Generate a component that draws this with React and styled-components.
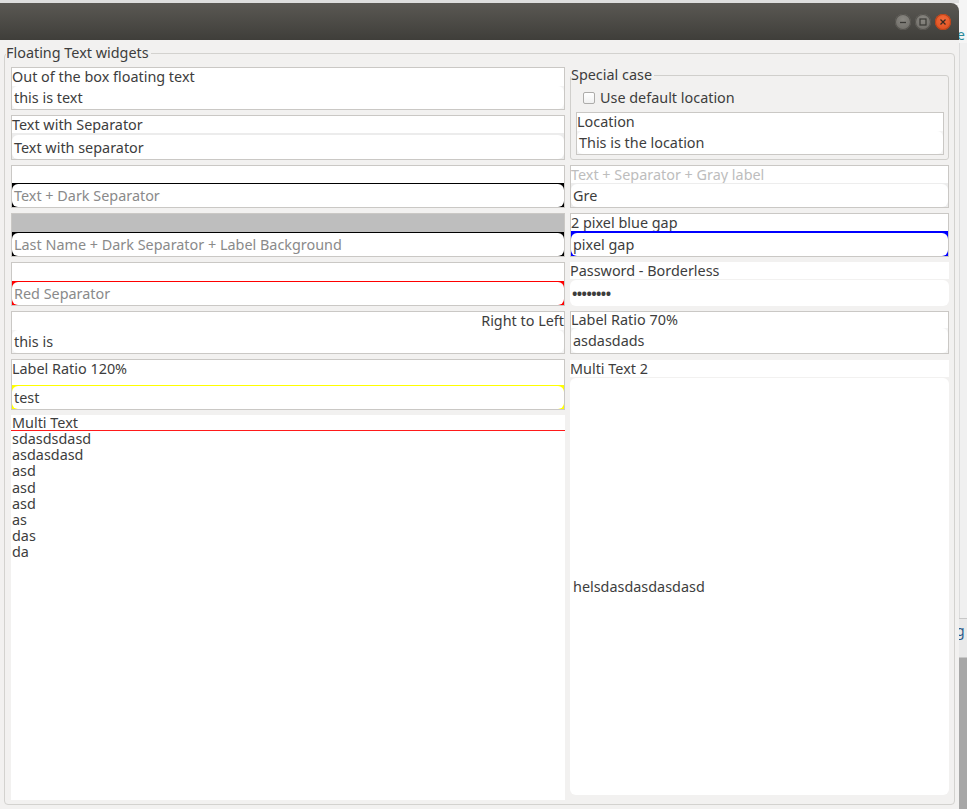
import React from 'react';
import styled, { createGlobalStyle } from 'styled-components';

const Global = createGlobalStyle`
  html, body { margin: 0; padding: 0; width: 967px; height: 809px; overflow: hidden; background: #dedede; }
  body { font-family: "Noto Sans", "Open Sans", sans-serif; font-size: 14.4px; color: #3d3d3d; }
  * { box-sizing: border-box; }
`;

const Screen = styled.div`
  display: flex;
  width: 967px;
  height: 809px;
`;

const Window = styled.div`
  width: 959px;
  flex: 0 0 959px;
  margin-top: 3px;
  display: flex;
  flex-direction: column;
  background: #f2f1f0;
`;

const TitleBar = styled.div`
  flex: 0 0 37px;
  background: linear-gradient(#5a5853, #3f3e3a);
  border-radius: 0 8px 0 0;
  display: flex;
  align-items: center;
  justify-content: flex-end;
  gap: 4px;
  padding: 1px 8px 0 0;
`;

const WinButton = styled.span`
  width: 16px;
  height: 16px;
  border-radius: 50%;
  display: flex;
  align-items: center;
  justify-content: center;
  background: ${p => (p.$close ? 'radial-gradient(circle at 50% 35%, #f26b3a, #d9491a)' : 'radial-gradient(circle at 50% 35%, #8a8882, #6a6863)')};
  box-shadow: inset 0 0 0 1px ${p => (p.$close ? '#b8431a' : '#55534e')};
`;

const Desktop = styled.div`
  flex: 1;
  display: flex;
  flex-direction: column;
  overflow: hidden;
  font-size: 14px;
`;

const DeskTop = styled.div`
  flex: 0 0 43px;
  background: #f5f5f5;
  color: #2a8a9a;
  line-height: 16px;
  padding-top: 27px;
  text-indent: -2px;
`;

const DeskMid = styled.div`
  flex: 0 0 575px;
  background: #f0f0f0;
  border-left: 1px solid #dcdcdc;
`;

const DeskLink = styled.div`
  flex: 0 0 40px;
  background: #e9e9e9;
  border-top: 1px solid #c8c8c8;
  border-bottom: 1px solid #c8c8c8;
  color: #2a5a8a;
  text-decoration: underline;
  text-indent: -3px;
  line-height: 24px;
`;

const DeskLow = styled.div`
  flex: 1;
  background: #a7a7a7;
`;

const Body = styled.div`
  flex: 1;
  padding: 5px 4px 4px 4px;
`;

const Frame = styled.fieldset`
  margin: 0;
  border: 1px solid #d3d2cf;
  border-radius: 4px;
  padding: 6px 5px 4px 6px;
  min-width: 0;
`;

const Legend = styled.legend`
  padding: 0 2px 0 0;
  margin-left: ${p => p.$offset}px;
  line-height: 16px;
  color: #3d3d3d;
`;

const Grid = styled.div`
  display: grid;
  height: 733px;
  grid-template-columns: 554px 379px;
  grid-template-rows: 43px 45px 43px 44px 44px 43px 51px 1fr;
  column-gap: 5px;
  row-gap: 5px;
`;

const Cell = styled.div`
  grid-column: ${p => p.$col};
  grid-row: ${p => p.$row};
  display: flex;
  flex-direction: column;
  min-height: 0;
`;

const Box = styled.div`
  flex: 1;
  display: flex;
  flex-direction: column;
  border: ${p => (p.$borderless ? 'none' : '1px solid #cac8c5')};
  background: ${p => (p.$borderless ? 'transparent' : '#ffffff')};
  min-height: 0;
`;

const Label = styled.div`
  flex: 1 1 auto;
  min-height: 0;
  background: ${p => p.$bg || '#ffffff'};
  color: ${p => p.$color || '#3d3d3d'};
  text-align: ${p => p.$align || 'left'};
  line-height: ${p => p.$lh || 18}px;
  white-space: nowrap;
`;

const Field = styled.div`
  flex: 0 0 ${p => p.$h}px;
  background: ${p => p.$sep};
  padding-top: ${p => p.$sepW}px;
  display: flex;
`;

const Input = styled.div`
  flex: 1;
  background: #ffffff;
  border-radius: 6px;
  display: flex;
  align-items: center;
  padding-left: 2px;
  white-space: nowrap;
  overflow: hidden;
  color: ${p => (p.$placeholder ? '#8a8a8a' : '#3d3d3d')};
`;

const Group = styled.fieldset`
  flex: 1;
  margin: 0;
  border: 1px solid #d0cfcc;
  border-radius: 3px;
  padding: 7px 4px 4px 5px;
  min-width: 0;
  display: flex;
  flex-direction: column;
`;

const CheckRow = styled.label`
  flex: 0 0 16px;
  margin: 0 0 6px 7px;
  display: flex;
  align-items: center;
  gap: 5px;
  line-height: 16px;
`;

const CheckBox = styled.span`
  width: 12px;
  height: 12px;
  border: 1px solid #adacaa;
  border-radius: 2px;
  background: linear-gradient(#ffffff, #f1f1f1);
`;

const LocationWrap = styled.div`
  flex: 0 0 43px;
  display: flex;
  flex-direction: column;
`;

const MultiBox = styled.div`
  flex: 1;
  background: #ffffff;
  display: flex;
  flex-direction: column;
`;

const MultiLabel = styled.div`
  flex: 0 0 15px;
  line-height: 15px;
  border-bottom: 1px solid #ff1a1a;
  padding-left: 1px;
`;

const MultiLines = styled.div`
  line-height: 16.2px;
  padding-left: 1px;
  white-space: pre;
`;

const Multi2 = styled.div`
  flex: 1;
  margin: 1px 0 5px;
  display: flex;
  flex-direction: column;
  gap: 1px;
`;

const Multi2Label = styled.div`
  flex: 0 0 17px;
  background: #ffffff;
  line-height: 17px;
`;

const Multi2Area = styled.div`
  flex: 1;
  background: #ffffff;
  border-radius: 6px;
  display: flex;
  align-items: center;
  padding-left: 3px;
`;

const Dots = styled.span`
  font-size: 14.4px;
  font-weight: 700;
  letter-spacing: -0.6px;
`;

function FloatingText({ label, value, placeholder, sep = '#f4f4f4', sepW = 0, fieldH = 23, labelBg, labelColor, labelLh, align, borderless }) {
  return (
    <Box $borderless={borderless}>
      <Label $bg={labelBg} $color={labelColor} $align={align} $lh={labelLh}>{label}</Label>
      <Field $h={fieldH} $sep={sep} $sepW={sepW}>
        <Input $placeholder={!value && !!placeholder}>{value || placeholder}</Input>
      </Field>
    </Box>
  );
}

const Minus = () => (
  <svg width="8" height="8" viewBox="0 0 8 8"><path d="M1 4.5h6" stroke="#3a3935" strokeWidth="1.3" /></svg>
);
const Square = () => (
  <svg width="8" height="8" viewBox="0 0 8 8"><rect x="1" y="1" width="6" height="6" fill="none" stroke="#3a3935" strokeWidth="1.2" /></svg>
);
const Cross = () => (
  <svg width="8" height="8" viewBox="0 0 8 8"><path d="M1.5 1.5l5 5M6.5 1.5l-5 5" stroke="#3a2a22" strokeWidth="1.3" /></svg>
);

const multiText = ['sdasdsdasd', 'asdasdasd', 'asd', 'asd', 'asd', 'as', 'das', 'da'].join('\n');

export default function App() {
  return (
    <>
      <Global />
      <Screen>
        <Window>
          <TitleBar>
            <WinButton><Minus /></WinButton>
            <WinButton><Square /></WinButton>
            <WinButton $close><Cross /></WinButton>
          </TitleBar>
          <Body>
            <Frame>
              <Legend $offset={-5}>Floating Text widgets</Legend>
              <Grid>
                <Cell $col="1" $row="1">
                  <FloatingText label="Out of the box floating text" value="this is text" />
                </Cell>
                <Cell $col="1" $row="2">
                  <FloatingText label="Text with Separator" value="Text with separator" fieldH={26} sep="#ececec" sepW={2} />
                </Cell>
                <Cell $col="1" $row="3">
                  <FloatingText label="" placeholder="Text + Dark Separator" fieldH={24} sep="#000000" sepW={1} />
                </Cell>
                <Cell $col="1" $row="4">
                  <FloatingText label="" labelBg="#bebebe" placeholder="Last Name + Dark Separator + Label Background" fieldH={24} sep="#000000" sepW={1} />
                </Cell>
                <Cell $col="1" $row="5">
                  <FloatingText label="" placeholder="Red Separator" fieldH={24} sep="#ff0000" sepW={1} />
                </Cell>
                <Cell $col="1" $row="6">
                  <FloatingText label="Right to Left" align="right" value="this is" />
                </Cell>
                <Cell $col="1" $row="7">
                  <FloatingText label="Label Ratio 120%" value="test" fieldH={24} sep="#ffff00" sepW={1} />
                </Cell>
                <Cell $col="1" $row="8">
                  <MultiBox>
                    <MultiLabel>Multi Text</MultiLabel>
                    <MultiLines>{multiText}</MultiLines>
                  </MultiBox>
                </Cell>

                <Cell $col="2" $row="1 / span 2">
                  <Group>
                    <Legend $offset={-5}>Special case</Legend>
                    <CheckRow>
                      <CheckBox />
                      Use default location
                    </CheckRow>
                    <LocationWrap>
                      <FloatingText label="Location" value="This is the location" />
                    </LocationWrap>
                  </Group>
                </Cell>
                <Cell $col="2" $row="3">
                  <FloatingText label="Text + Separator + Gray label" labelColor="#bdbdbd" value="Gre" fieldH={24} sep="#ededed" sepW={1} />
                </Cell>
                <Cell $col="2" $row="4">
                  <FloatingText label="2 pixel blue gap" value="pixel gap" fieldH={25} sep="#0000ff" sepW={2} />
                </Cell>
                <Cell $col="2" $row="5">
                  <FloatingText borderless label="Password - Borderless" value={<Dots>••••••••</Dots>} fieldH={27} sep="transparent" sepW={1} />
                </Cell>
                <Cell $col="2" $row="6">
                  <FloatingText label="Label Ratio 70%" labelLh={16} value="asdasdads" fieldH={25} />
                </Cell>
                <Cell $col="2" $row="7 / span 2">
                  <Multi2>
                    <Multi2Label>Multi Text 2</Multi2Label>
                    <Multi2Area>helsdasdasdasdasd</Multi2Area>
                  </Multi2>
                </Cell>
              </Grid>
            </Frame>
          </Body>
        </Window>
        <Desktop>
          <DeskTop>e</DeskTop>
          <DeskMid />
          <DeskLink>g</DeskLink>
          <DeskLow />
        </Desktop>
      </Screen>
    </>
  );
}
